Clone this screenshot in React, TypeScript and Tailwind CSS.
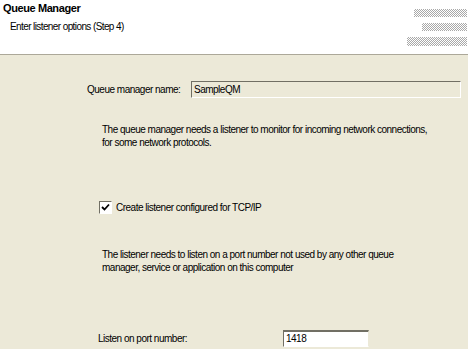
const font = { fontFamily: '"Liberation Sans", Arial, sans-serif' };

function Hatch({ className }: { className: string }) {
  return (
    <div
      className={`h-[8px] bg-[repeating-conic-gradient(#a9a9a9_0_25%,#ffffff_0_50%)] bg-[length:2px_2px] ${className}`}
    />
  );
}

export default function App() {
  return (
    <div
      className="w-[468px] h-[349px] overflow-hidden bg-[#ece9d8] text-[10px] tracking-[-0.5px] text-black whitespace-nowrap"
      style={font}
    >
      <div className="h-[55px] bg-white border-b border-[#aca899] flex justify-between">
        <div className="pl-[3px] pt-[1px]">
          <div className="font-bold text-[11px] tracking-[-0.4px] leading-[14px]">Queue Manager</div>
          <div className="pl-[7px] pt-[5px] leading-[14px] tracking-[-0.6px]">Enter listener options (Step 4)</div>
        </div>
        <div className="flex flex-col items-end gap-[6px] pt-[9px] pr-[1px]">
          <Hatch className="w-[53px]" />
          <Hatch className="w-[45px]" />
          <Hatch className="w-[60px] h-[9px]" />
        </div>
      </div>

      <div className="flex items-center pl-[87px] mt-[26px]">
        <span className="w-[104px]">Queue manager name:</span>
        <div className="w-[270px] h-[17px] border-t border-l border-[#716f64] border-r border-b border-r-white border-b-white px-[2px] leading-[15px]">
          SampleQM
        </div>
      </div>

      <p className="pl-[102px] mt-[25px] leading-[13px]">
        The queue manager needs a listener to monitor for incoming network connections,
        <br />
        for some network protocols.
      </p>

      <label className="flex items-center pl-[99px] mt-[51px]">
        <span className="w-[13px] h-[13px] border border-[#716f64] border-r-white border-b-white bg-white flex items-center justify-center">
          <svg width="9" height="9" viewBox="0 0 9 9">
            <path d="M1 4 L3.5 6.5 L8 1.5" stroke="#000" strokeWidth="1.8" fill="none" />
          </svg>
        </span>
        <span className="ml-[4px]">Create listener configured for TCP/IP</span>
      </label>

      <p className="pl-[102px] mt-[33px] leading-[13px]">
        The listener needs to listen on a port number not used by any other queue
        <br />
        manager, service or application on this computer
      </p>

      <div className="flex items-center pl-[98px] mt-[56px]">
        <span className="w-[185px]">Listen on port number:</span>
        <div className="w-[86px] h-[17px] bg-white border-t-2 border-l border-[#716f64] border-r border-b border-r-[#ece9d8] border-b-white px-[2px] leading-[14px]">
          1418
        </div>
      </div>
    </div>
  );
}
